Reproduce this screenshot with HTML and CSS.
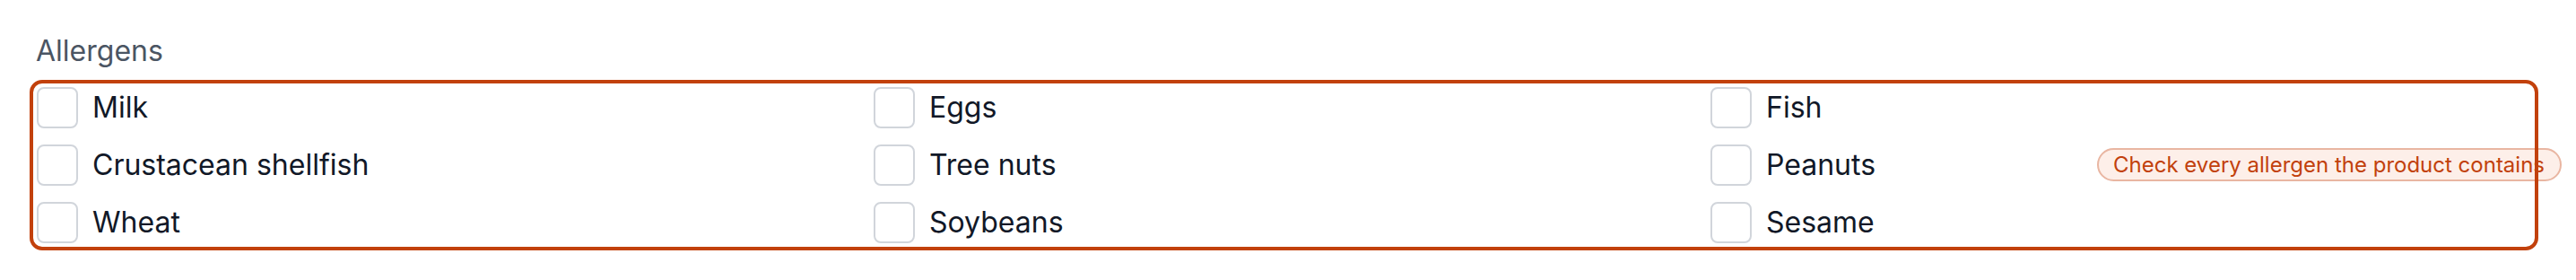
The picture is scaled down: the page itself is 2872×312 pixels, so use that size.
FILE: index.html
```html
<!DOCTYPE html>
<html lang="en">
<head>
  <meta charset="UTF-8">
  <meta name="viewport" content="width=device-width, initial-scale=1.0">
  <title>Allergens</title>
  <link rel="stylesheet" href="styles.css">
</head>
<body>
  <div class="field">
    <div class="field-label">Allergens</div>

    <!-- Allergen checkboxes -->
    <div class="options">
      <label class="option"><input type="checkbox" name="allergen" value="milk"><span>Milk</span></label>
      <label class="option"><input type="checkbox" name="allergen" value="eggs"><span>Eggs</span></label>
      <label class="option"><input type="checkbox" name="allergen" value="fish"><span>Fish</span></label>
      <label class="option"><input type="checkbox" name="allergen" value="shellfish"><span>Crustacean shellfish</span></label>
      <label class="option"><input type="checkbox" name="allergen" value="tree-nuts"><span>Tree nuts</span></label>
      <label class="option"><input type="checkbox" name="allergen" value="peanuts"><span>Peanuts</span></label>
      <label class="option"><input type="checkbox" name="allergen" value="wheat"><span>Wheat</span></label>
      <label class="option"><input type="checkbox" name="allergen" value="soybeans"><span>Soybeans</span></label>
      <label class="option"><input type="checkbox" name="allergen" value="sesame"><span>Sesame</span></label>

      <span class="hint">Check every allergen the product contains</span>
    </div>
  </div>
</body>
</html>
```

FILE: styles.css
```css
/* General Styling */
body {
  font-family: Inter, 'Noto Sans', sans-serif;
  margin: 0;
  padding: 34px 0 0 33px;
  background: #fff;
  color: #111827;
}

.field {
  width: 2797px;
}

.field-label {
  font-size: 32px;
  line-height: 45px;
  color: #4b5563;
  padding-left: 7px;
  margin-bottom: 10px;
}

/* Checkbox grid with the error outline */
.options {
  position: relative;
  display: grid;
  grid-template-columns: repeat(3, 1fr);
  gap: 18px;
  padding: 8px;
}

.options::after {
  content: '';
  position: absolute;
  inset: 0;
  border: 4px solid #c2410c;
  border-radius: 14px;
  z-index: 2;
  pointer-events: none;
}

.option {
  display: flex;
  align-items: center;
  gap: 16px;
  font-size: 32px;
  line-height: 46px;
  cursor: pointer;
}

.option input {
  appearance: none;
  -webkit-appearance: none;
  margin: 0;
  width: 46px;
  height: 46px;
  flex-shrink: 0;
  border: 2px solid #d1d5db;
  border-radius: 8px;
  background: #fff;
}

.hint {
  position: absolute;
  top: 76px;
  left: 2305px;
  z-index: 1;
  padding: 0 17px 0 16px;
  font-size: 24px;
  line-height: 33px;
  color: #c2410c;
  background: #fdefe9;
  border: 2px solid #e9b6a2;
  border-radius: 999px;
  white-space: nowrap;
}
```
